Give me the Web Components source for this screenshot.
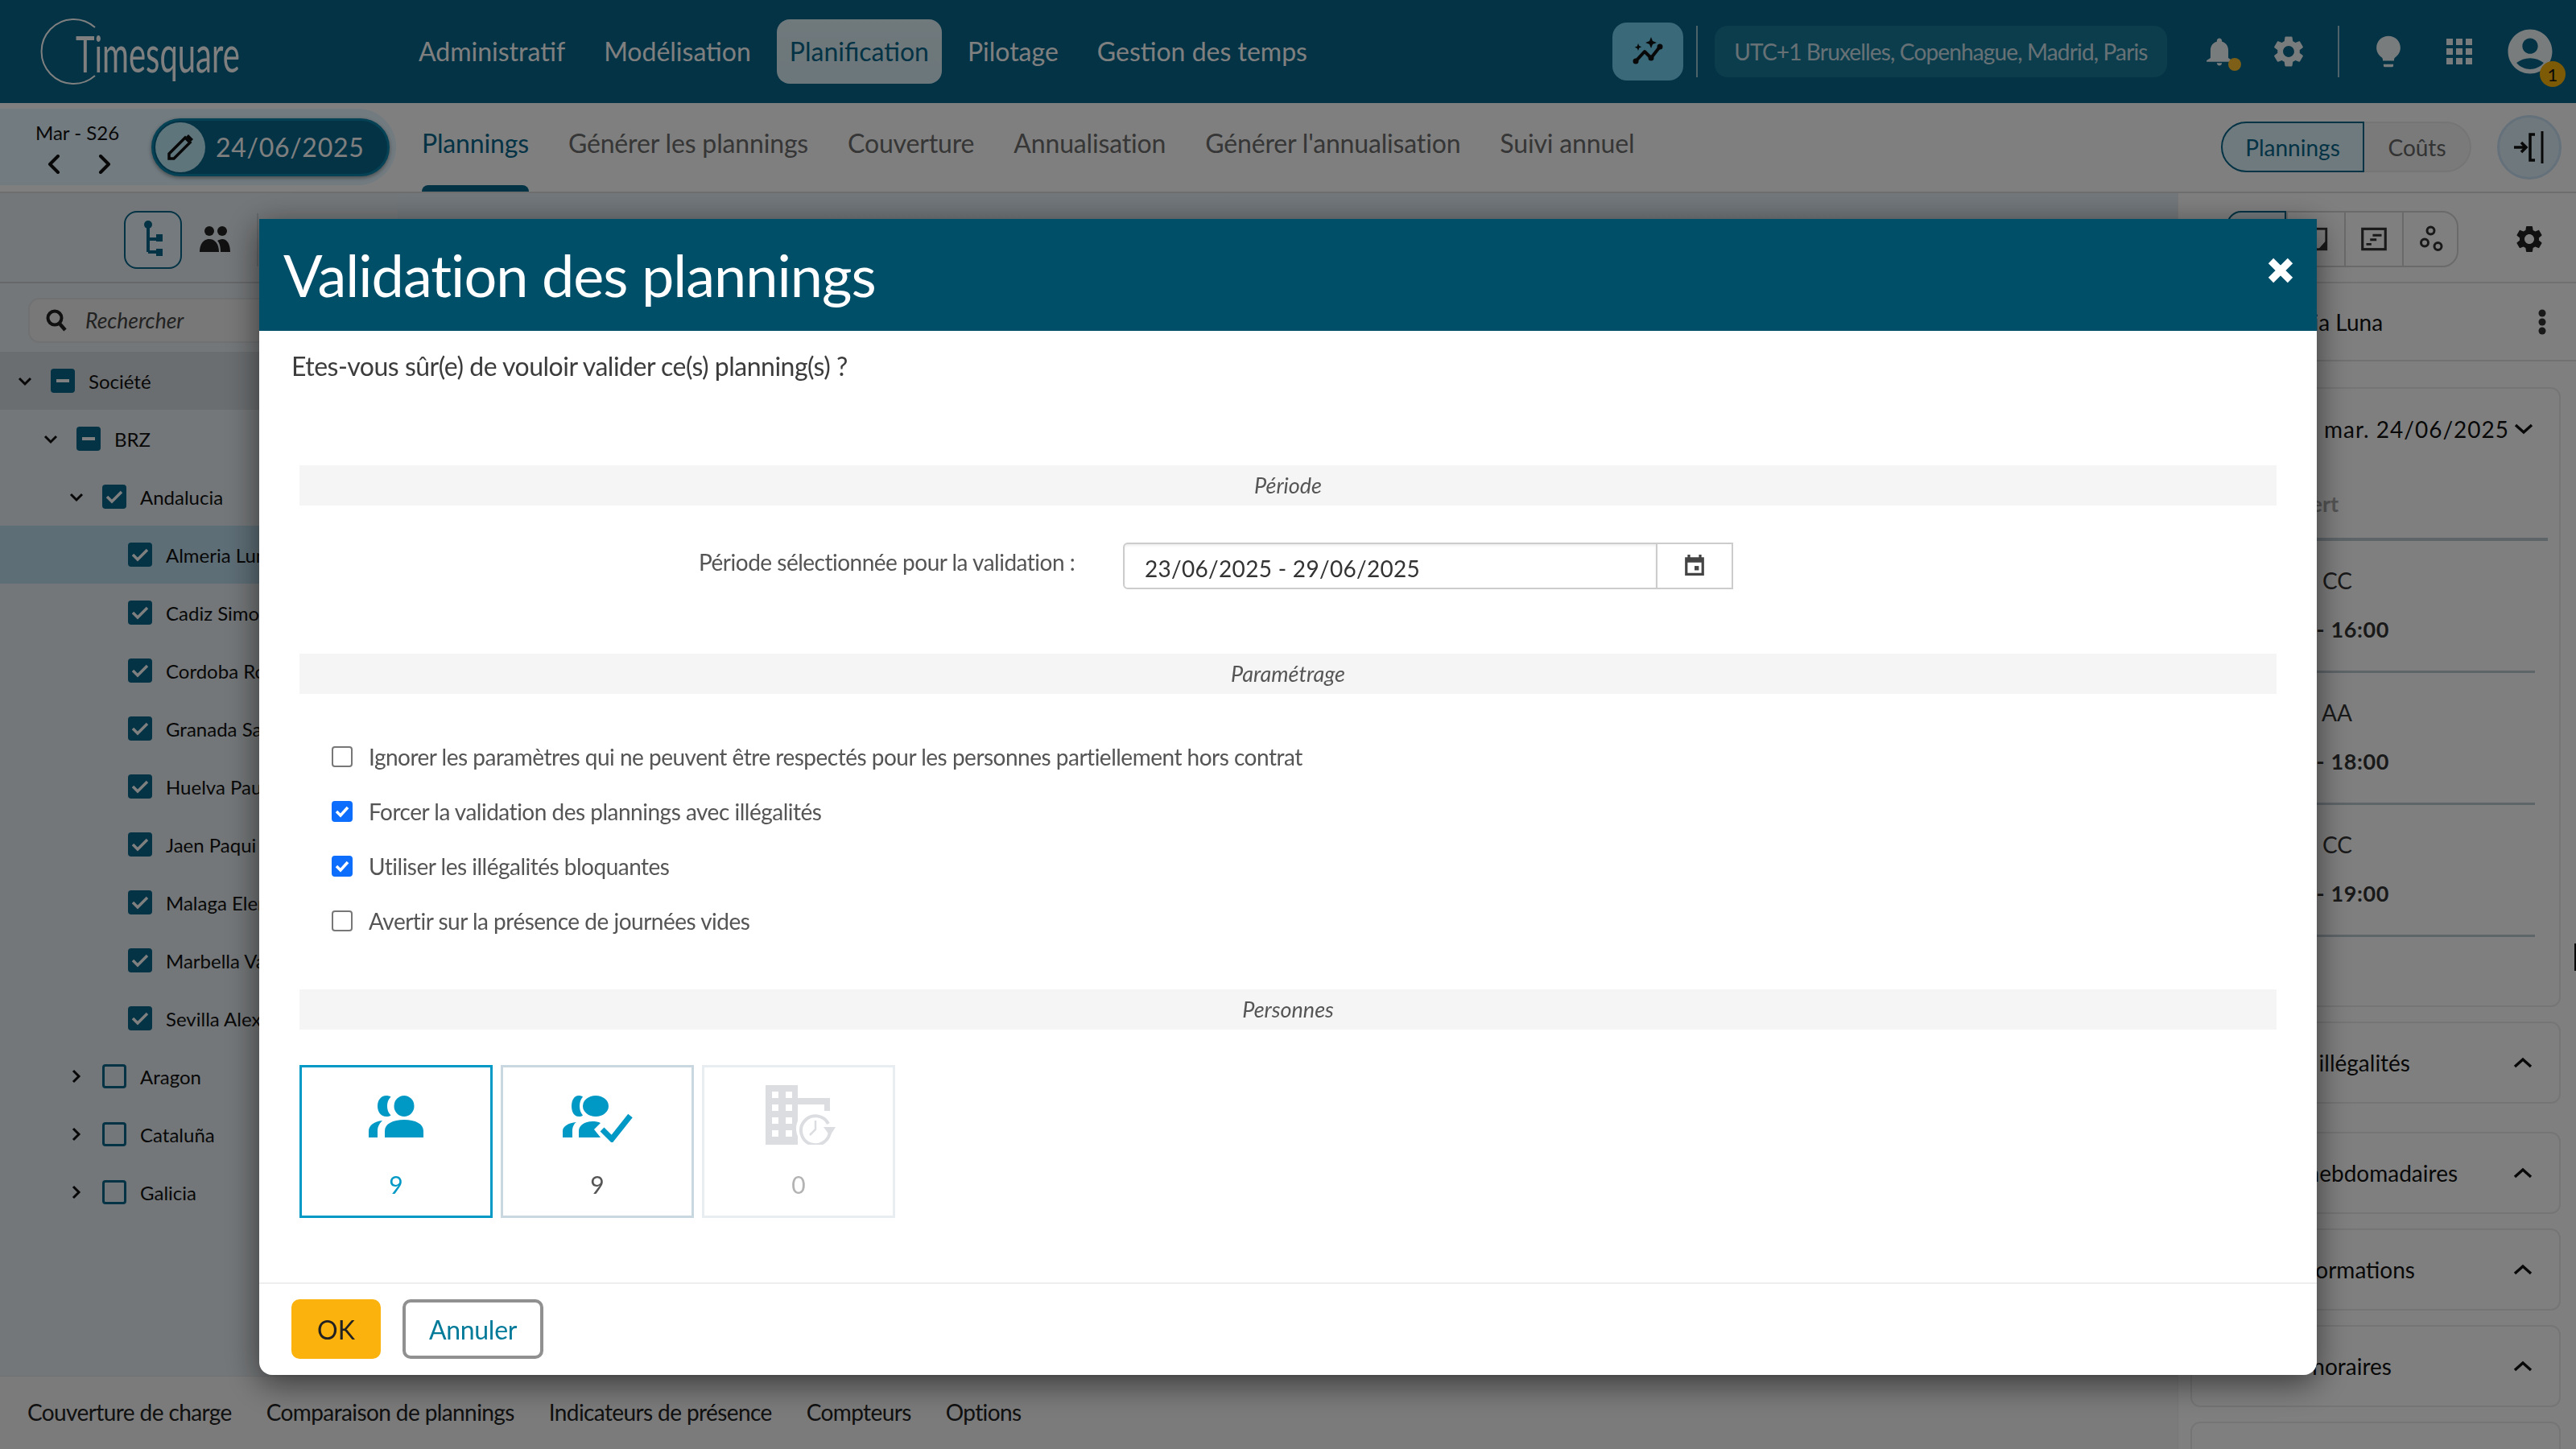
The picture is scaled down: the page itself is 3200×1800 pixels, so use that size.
<!DOCTYPE html>
<html lang="fr"><head><meta charset="utf-8"><title>Validation des plannings</title>
<style>
html,body{margin:0;padding:0;width:3200px;height:1800px;overflow:hidden;background:#fff;font-family:Lato,"Open Sans",sans-serif}
</style></head><body>
<ts-app></ts-app>
<ts-overlay>
  <ts-modal>
    <span slot="title">Validation des plannings</span>
    <ts-period></ts-period>
  </ts-modal>
</ts-overlay>
<script>
const I={
gear:'<path d="M19.14 12.94c.04-.3.06-.61.06-.94 0-.32-.02-.64-.07-.94l2.03-1.58c.18-.14.23-.41.12-.61l-1.92-3.32c-.12-.22-.37-.29-.59-.22l-2.39.96c-.5-.38-1.03-.7-1.62-.94l-.36-2.54c-.04-.24-.24-.41-.48-.41h-3.84c-.24 0-.43.17-.47.41l-.36 2.54c-.59.24-1.13.57-1.62.94l-2.39-.96c-.22-.08-.47 0-.59.22L2.74 8.87c-.12.21-.08.47.12.61l2.03 1.58c-.05.3-.09.63-.09.94s.02.64.07.94l-2.03 1.58c-.18.14-.23.41-.12.61l1.92 3.32c.12.22.37.29.59.22l2.39-.96c.5.38 1.03.7 1.62.94l.36 2.54c.05.24.24.41.48.41h3.84c.24 0 .44-.17.47-.41l.36-2.54c.59-.24 1.13-.56 1.62-.94l2.39.96c.22.08.47 0 .59-.22l1.92-3.32c.12-.22.07-.47-.12-.61l-2.01-1.58zM12 15.6c-1.98 0-3.6-1.62-3.6-3.6s1.62-3.6 3.6-3.6 3.6 1.62 3.6 3.6-1.62 3.6-3.6 3.6z"/>',
bell:'<path d="M12 23c1.1 0 2-.9 2-2h-4c0 1.1.9 2 2 2zm7-6v-6c0-3.4-1.9-6.1-5-6.8V3.500c0-1.100-.9-2-2-2s-2 .9-2 2v.7C6.900 4.900 5 7.600 5 11v6l-3 2v1h20v-1l-3-2z"/>',
bulb:'<path d="M8.500 21h7v1.200c0 .5-.4.8-.8.8H9.300c-.4 0-.8-.3-.8-.8V21zM12 1C7 1 3.500 4.800 3.500 9.300c0 3 1.600 5.300 3.700 6.900.6.500.8 1.100.8 1.800v.5h8V18c0-.7.2-1.300.8-1.800 2.100-1.600 3.700-3.900 3.700-6.900C20.500 4.800 17 1 12 1z"/>',
user:'<path d="M12 2C6.480 2 2 6.480 2 12s4.480 10 10 10 10-4.480 10-10S17.520 2 12 2zm0 4c1.930 0 3.500 1.570 3.500 3.500S13.930 13 12 13s-3.500-1.570-3.500-3.500S10.070 6 12 6zm0 14c-2.030 0-4.430-.82-6.140-2.880C7.550 15.800 9.680 15 12 15s4.450.8 6.140 2.120C16.430 19.180 14.030 20 12 20z"/>',
};
function svg(p,s,c,vb='0 0 24 24',extra=''){return `<svg width="${s}" height="${s}" viewBox="${vb}" fill="${c}" style="display:block;flex:none;${extra}">${p}</svg>`}
const def=(n,css,html,init)=>customElements.define(n,class extends HTMLElement{
  connectedCallback(){ if(this.shadowRoot)return; const r=this.attachShadow({mode:'open'});
    const h=typeof html==='function'?html(this):html; r.innerHTML=`<style>${css}</style>${h}`; if(init)init(this,r);}
});

def('ts-app',`:host{display:grid;grid-template-rows:128px 112px 1fr;width:3200px;height:1800px;font-family:Lato,sans-serif}
.body{display:grid;grid-template-columns:2705px 495px;min-height:0}
.main{display:grid;grid-template-rows:1fr 91px;min-height:0}
.up{display:grid;grid-template-columns:494px 1fr;min-height:0}
.mid{background:linear-gradient(#e4f0f8,#dde6ec 60px,#e8eef2)}`,
`<ts-topbar></ts-topbar><ts-subbar></ts-subbar>
<div class="body"><div class="main"><div class="up"><ts-tree></ts-tree><div class="mid"></div></div><ts-bottom></ts-bottom></div><ts-right></ts-right></div>`);

def('ts-topbar',`:host{display:flex;align-items:center;background:#06668a;color:#fff;height:128px;box-sizing:border-box}
.logo{width:504px;height:128px;flex:none;display:flex;align-items:center;box-sizing:border-box;padding-left:48px}
.logo svg{flex:none}
.logo span{display:block;font:400 62px/1 Lato,sans-serif;margin-left:-28px;margin-top:4px;transform:scaleX(.645);transform-origin:0 50%;white-space:nowrap}
nav{display:flex;gap:16px;width:1499px;flex:none;font-size:32px}
nav a{height:80px;display:flex;align-items:center;padding:0 16px;border-radius:16px;white-space:nowrap;padding-bottom:1px;box-sizing:border-box}
nav a.on{background:linear-gradient(#e0f2f8,#d7eef6);color:#06668a}
.spark{width:88px;height:72px;border-radius:18px;background:#74d4f5;display:flex;align-items:center;justify-content:center;flex:none}
.div{width:2px;height:64px;background:#9dc4d2;flex:none}
.tz{margin-left:21px;height:64px;width:562px;border-radius:16px;background:#187a9a;color:#cfe3ea;display:flex;align-items:center;justify-content:center;font-size:28px;flex:none;letter-spacing:-.85px;white-space:nowrap}
.ic{flex:none;position:relative;display:flex;align-items:center;justify-content:center}
.dot{position:absolute;right:-8px;bottom:-4px;width:16px;height:16px;border-radius:50%;background:#fcbf2f}
.badge{position:absolute;right:-11px;bottom:-11px;width:32px;height:32px;border-radius:50%;background:#fbb40a;color:#111;font-size:22px;display:flex;align-items:center;justify-content:center}`,
`<div class="logo"><svg width="74" height="84" viewBox="0 0 74 84"><path d="M70 12 A40 40 0 1 0 70 72" fill="none" stroke="#fff" stroke-width="2"/></svg><span>Timesquare</span></div>
<nav><a>Administratif</a><a>Modélisation</a><a class="on">Planification</a><a>Pilotage</a><a>Gestion des temps</a></nav>
<div class="spark"><svg width="40" height="36" viewBox="0 0 40 36"><path d="M5 30 L16 18 L24 26 L35 12" fill="none" stroke="#111" stroke-width="4" stroke-linecap="round" stroke-linejoin="round"/><circle cx="5" cy="30" r="3.500" fill="#111"/><circle cx="24" cy="26" r="3.500" fill="#111"/><circle cx="35" cy="12" r="3.500" fill="#111"/><path d="M24 0l2 5 5 2-5 2-2 5-2-5-5-2 5-2zM8 8l1.300 3 3 1.300-3 1.300L8 17l-1.300-3-3-1.300 3-1.300z" fill="#111"/></svg></div>
<div class="div" style="margin-left:16px"></div>
<div class="tz">UTC+1 Bruxelles, Copenhague, Madrid, Paris</div>
<div class="ic" style="margin-left:46px;width:38px;height:40px">${svg(I.bell,38,'#f0f8fb')}<i class="dot"></i></div>
<div class="ic" style="margin-left:44px">${svg(I.gear,46,'#f0f8fb')}</div>
<div class="div" style="margin-left:38px"></div>
<div class="ic" style="margin-left:40px">${svg(I.bulb,42,'#f0f8fb')}</div>
<div class="ic" style="margin-left:51px;width:32px;height:32px;display:grid;grid-template-columns:repeat(3,8px);gap:4px">${'<i style="background:#f0f8fb;width:8px;height:8px;display:block"></i>'.repeat(9)}</div>
<div class="ic" style="margin-left:39px;width:66px;height:66px">${svg(I.user,66,'#f0f8fb')}<span class="badge">1</span></div>`);

def('ts-subbar',`:host{display:flex;align-items:stretch;background:#fff;height:112px;box-sizing:border-box;border-bottom:2px solid #dcdcdc}
.w{width:492px;height:95px;margin-top:7px;background:#e4f6ff;border-radius:0 48px 48px 0;display:flex;align-items:center;flex:none;box-sizing:border-box;padding-left:44px}
.wk{width:102px;text-align:center;font-size:24px;color:#111;white-space:nowrap}
.ar{display:flex;justify-content:space-between;padding:13px 8px 0 15px}
.pill{margin-left:42px;width:296px;height:72px;box-sizing:border-box;border-radius:36px;background:#06668a;border:3px solid #0b84ab;display:flex;align-items:center;color:#fff;box-shadow:0 2px 5px #0006;font-size:32px;letter-spacing:.7px}
.c{width:62px;height:62px;border-radius:50%;background:#bdeaf8;margin:0 13px 0 2px;display:flex;align-items:center;justify-content:center;flex:none}
.tabs{display:flex;gap:49px;margin-left:32px;font-size:32px;color:#6c6c6c;width:2235px;flex:none;align-self:stretch}
.tabs a{height:110px;display:flex;align-items:center;box-sizing:border-box;padding-bottom:12px;white-space:nowrap;letter-spacing:-.16px;position:relative}
.tabs a.on{color:#06668a}
.tabs a.on::after{content:"";position:absolute;left:0;right:0;bottom:0;height:8px;background:#06668a;border-radius:8px 8px 0 0}
.seg{display:flex;height:63px;margin-top:23px;font-size:28px}
.seg a{display:flex;align-items:center;justify-content:center;box-sizing:border-box;white-space:nowrap}
.seg .a{width:178px;background:#dff4fd;border:2px solid #06668a;border-radius:32px 0 0 32px;color:#06668a}
.seg .b{width:133px;background:#f4f4f4;border:2px solid #eaeaea;border-left:0;border-radius:0 32px 32px 0;color:#666}
.rb{margin-left:32px;margin-top:15px;width:80px;height:80px;border-radius:50%;box-sizing:border-box;background:#dff0fb;border:3px solid #c9e0f5;display:flex;align-items:center;justify-content:center}`,
`<div class="w"><div><div class="wk">Mar - S26</div><div class="ar"><svg width="16" height="24" viewBox="0 0 16 24"><path d="M13 2 3 12l10 10" fill="none" stroke="#111" stroke-width="4" stroke-linecap="round" stroke-linejoin="round"/></svg><svg width="16" height="24" viewBox="0 0 16 24"><path d="M3 2l10 10L3 22" fill="none" stroke="#111" stroke-width="4" stroke-linecap="round" stroke-linejoin="round"/></svg></div></div>
<div class="pill"><div class="c"><svg width="34" height="34" viewBox="0 0 34 34"><path d="M3 31v-6L23 5l6 6L9 31z" fill="none" stroke="#111" stroke-width="3.500"/><path d="M24 4l3-3 6 6-3 3z" fill="#111"/></svg></div>24/06/2025</div></div>
<div class="tabs"><a class="on">Plannings</a><a>Générer les plannings</a><a>Couverture</a><a>Annualisation</a><a>Générer l'annualisation</a><a>Suivi annuel</a></div>
<div class="seg"><a class="a">Plannings</a><a class="b">Coûts</a></div>
<div class="rb"><svg width="40" height="40" viewBox="0 0 40 40"><path d="M1 20h14M10 14l6 6-6 6" fill="none" stroke="#111" stroke-width="3.500"/><path d="M27 4h-6v32h6" fill="none" stroke="#111" stroke-width="3.500"/><path d="M36 0v40" stroke="#111" stroke-width="3"/></svg></div>`);

def('ts-tree-row',`:host{display:flex;align-items:center;height:72px;box-sizing:border-box;font-size:24px;color:#111;white-space:nowrap;padding-left:calc(var(--l,0)*32px + 22px)}
:host([sel]){background:#bcdcec}
:host([head]){background:#d6dce0}
.ch{width:18px;height:18px;flex:none;margin-right:23px}
.b{width:30px;height:30px;box-sizing:border-box;border-radius:4px;flex:none;margin-right:17px;display:flex;align-items:center;justify-content:center;background:#06668a}
.b.e{background:transparent;border:3px solid #06668a}`,
(h)=>{const st=h.getAttribute('st'),ch=h.getAttribute('ch');
 const chev=ch==='d'?'<path d="M2 6l7 7 7-7" fill="none" stroke="#111" stroke-width="3"/>':ch==='r'?'<path d="M5 2l7 7-7 7" fill="none" stroke="#111" stroke-width="3"/>':'';
 const m=st==='m'?'<i style="display:block;width:16px;height:4px;background:#fff"></i>':st==='c'?'<svg width="22" height="18" viewBox="0 0 22 18"><path d="M2 9l6 6L20 3" fill="none" stroke="#fff" stroke-width="3.500"/></svg>':'';
 return `<svg class="ch" viewBox="0 0 18 18">${chev}</svg><span class="b ${st==='e'?'e':''}">${m}</span><slot></slot>`});

def('ts-tree',`:host{display:block;background:#e8eef2;min-height:0;overflow:hidden}
.t{height:112px;box-sizing:border-box;border-bottom:2px solid #ccd0d3;display:flex;align-items:center;padding:6px 0 0 154px}
.tb{width:72px;height:72px;box-sizing:border-box;border:2px solid #06668a;border-radius:16px;display:flex;align-items:center;justify-content:center;background:#e8f4fa}
.sep{width:2px;height:66px;background:#ccd0d3;margin-left:33px}
.s{margin:18px 0 11px 35px;height:56px;box-sizing:border-box;border:2px solid #dfe2e4;border-radius:14px;background:#f1f1f1;display:flex;align-items:center;padding-left:20px;font-style:italic;font-size:26.500px;color:#444}
.s svg{margin-right:23px}`,
`<div class="t"><div class="tb"><svg width="24" height="50" viewBox="0 0 24 50"><circle cx="6" cy="6" r="5" fill="#06668a"/><path d="M6 8v32M6 24h14M6 40h14" stroke="#06668a" stroke-width="4" fill="none"/><rect x="16" y="18" width="8" height="9" fill="#06668a"/><rect x="16" y="36" width="8" height="9" fill="#06668a"/></svg></div>
<svg width="38" height="34" viewBox="0 0 38 34" style="margin-left:22px"><circle cx="12" cy="6" r="6" fill="#222"/><circle cx="28" cy="6" r="6" fill="#222"/><path d="M0 32c0-10 5-16 12-16s12 6 12 16zM26 32c0-6-1-11-4-14 2-1 4-2 6-2 6 0 10 6 10 16z" fill="#222"/></svg>
<div class="sep"></div></div>
<div class="s"><svg width="26" height="28" viewBox="0 0 26 28"><circle cx="11" cy="11" r="8.500" fill="none" stroke="#222" stroke-width="4"/><path d="M17 18l7 8" stroke="#222" stroke-width="4.500"/></svg>Rechercher</div>
<ts-tree-row l="0" ch="d" st="m" head style="--l:0">Société</ts-tree-row>
<ts-tree-row ch="d" st="m" style="--l:1">BRZ</ts-tree-row>
<ts-tree-row ch="d" st="c" style="--l:2">Andalucia</ts-tree-row>
<ts-tree-row st="c" sel style="--l:3">Almeria Luna</ts-tree-row>
<ts-tree-row st="c" style="--l:3">Cadiz Simon</ts-tree-row>
<ts-tree-row st="c" style="--l:3">Cordoba Rosa</ts-tree-row>
<ts-tree-row st="c" style="--l:3">Granada Sara</ts-tree-row>
<ts-tree-row st="c" style="--l:3">Huelva Paula</ts-tree-row>
<ts-tree-row st="c" style="--l:3">Jaen Paqui</ts-tree-row>
<ts-tree-row st="c" style="--l:3">Malaga Elena</ts-tree-row>
<ts-tree-row st="c" style="--l:3">Marbella Vale</ts-tree-row>
<ts-tree-row st="c" style="--l:3">Sevilla Alex</ts-tree-row>
<ts-tree-row ch="r" st="e" style="--l:2">Aragon</ts-tree-row>
<ts-tree-row ch="r" st="e" style="--l:2">Cataluña</ts-tree-row>
<ts-tree-row ch="r" st="e" style="--l:2">Galicia</ts-tree-row>`);

def('ts-bottom',`:host{display:flex;align-items:center;gap:43px;padding:0 0 2px 34px;box-sizing:border-box;background:#f6f6f6;border-top:1px solid #e2e2e2;font-size:28px;color:#222;white-space:nowrap;letter-spacing:-.6px}`,
`<span>Couverture de charge</span><span>Comparaison de plannings</span><span>Indicateurs de présence</span><span>Compteurs</span><span>Options</span>`);

def('ts-acc',`:host{display:flex;align-items:center;height:102px;box-sizing:border-box;border:2px solid #eaeaea;border-radius:12px;margin-bottom:18px;padding:0 33px 0 0;font-size:28px;color:#111;white-space:nowrap}
span{display:block;width:var(--w,200px);text-align:right;flex:none}
svg{margin-left:auto}`,`<span><slot></slot></span><svg width="24" height="14" viewBox="0 0 24 14"><path d="M2 12 12 3l10 9" fill="none" stroke="#111" stroke-width="3.500"/></svg>`);

def('ts-right',`:host{display:block;background:#fff;border-left:1px solid #eee;min-height:0;overflow:hidden;font-size:28px;color:#222;position:relative}
.t{height:112px;box-sizing:border-box;border-bottom:2px solid #e2e2e2;display:flex;align-items:center;padding:4px 0 0 60px}
.g{width:288px;height:70px;box-sizing:border-box;border:2px solid #d4d4d4;border-radius:20px;display:flex}
.g i{display:flex;flex:none;width:72px;align-items:center;justify-content:center;border-left:2px solid #d4d4d4;box-sizing:border-box}
.g i:first-child{border-left:0;border-radius:18px 0 0 18px;border:2px solid #06668a;margin:-2px 0 -2px -2px;width:74px;background:#e8f4fa}
.n{height:97px;box-sizing:border-box;border-bottom:2px solid #e2e2e2;display:flex;align-items:center;justify-content:space-between;padding:0 36px 0 94px;white-space:nowrap}
.n b{font-weight:400;color:#111}
.card{margin:32px 19px 18px 15px;height:770px;box-sizing:border-box;border:2px solid #eaeaea;border-radius:12px;padding-left:16px}
.d{height:99px;padding-bottom:2px;display:flex;align-items:center;justify-content:flex-end;padding-right:32px;font-size:28px;color:#111;white-space:nowrap;letter-spacing:1px;gap:6px;box-sizing:content-box}
.o{height:88px;margin-right:14px;border-bottom:4px solid #bccad2;box-sizing:border-box;color:#aaa;font-weight:700;font-size:27px;white-space:nowrap;line-height:84px}
.o span{display:block;width:166px;text-align:right}
.p{height:164px;margin-right:30px;border-bottom:3px solid #bccad2;box-sizing:border-box;padding-top:24px;white-space:nowrap}
.p .a{height:50px;line-height:50px;color:#333;width:183px;text-align:right}
.p .h{height:72px;line-height:72px;font-weight:700;color:#333;font-size:27px;letter-spacing:.6px;width:229px;text-align:right}
.ac{margin-left:15px;margin-right:19px}
.mark{position:absolute;right:0;top:932px;width:2px;height:34px;background:#111}`,
`<div class="t"><div class="g"><i></i><i>${svg('<rect x="3" y="3" width="18" height="18" fill="none" stroke="#333" stroke-width="2"/><path d="M14 21l7-8v8z" fill="#333"/>',34,'none')}</i><i>${svg('<rect x="3" y="4" width="18" height="16" fill="none" stroke="#333" stroke-width="2"/><path d="M11 9h7M9 12.500h5M6 16h4" stroke="#333" stroke-width="1.800"/>',38,'none')}</i><i>${svg('<circle cx="11" cy="5" r="3" fill="none" stroke="#333" stroke-width="2"/><circle cx="6" cy="15" r="3" fill="none" stroke="#333" stroke-width="2"/><circle cx="17" cy="18" r="3" fill="none" stroke="#333" stroke-width="2"/>',36,'none')}</i></div>
<div style="margin-left:68px">${svg(I.gear,40,'#222')}</div></div>
<div class="n"><b>Almeria Luna</b><svg width="12" height="32" viewBox="0 0 12 32"><circle cx="6" cy="5" r="4.500" fill="#333"/><circle cx="6" cy="16" r="4.500" fill="#333"/><circle cx="6" cy="27" r="4.500" fill="#333"/></svg></div>
<div class="card"><div class="d">mar. 24/06/2025 <svg width="24" height="14" viewBox="0 0 24 14"><path d="M2 2l10 9 10-9" fill="none" stroke="#111" stroke-width="3.500"/></svg></div>
<div class="o"><span>Ouvert</span></div>
<div class="p"><div class="a">Équipe CC</div><div class="h">08:00 - 16:00</div></div>
<div class="p"><div class="a">Équipe AA</div><div class="h">10:00 - 18:00</div></div>
<div class="p"><div class="a">Équipe CC</div><div class="h">11:00 - 19:00</div></div></div>
<div class="ac"><ts-acc style="--w:271px;margin-bottom:35px">Les illégalités</ts-acc><ts-acc style="--w:326px">Compteurs hebdomadaires</ts-acc><ts-acc style="--w:277px">Plus d'informations</ts-acc><ts-acc style="--w:248px">Détails des horaires</ts-acc><ts-acc></ts-acc></div>
<i class="mark"></i>`);

def('ts-overlay',`:host{position:fixed;inset:0;background:rgba(0,0,0,.5);display:block}`,`<slot></slot>`);

def('ts-modal',`:host{position:absolute;left:322px;top:272px;width:2556px;height:1436px;background:#fff;border-radius:0 0 16px 16px;box-shadow:0 10px 40px rgba(0,0,0,.55);display:flex;flex-direction:column;font-family:Lato,sans-serif}
header{height:139px;flex:none;background:#004f69;color:#fff;display:flex;align-items:center;justify-content:space-between;box-sizing:border-box;padding:0 27px 2px 30px;font-size:72px;letter-spacing:-.98px;white-space:nowrap}
header svg{margin-top:-10px}
.q{margin:24px 0 0 40px;font-size:32px;color:#3c3c3c;height:40px;line-height:40px;white-space:nowrap;letter-spacing:-.5px}
.bd{flex:1}
footer{height:115px;border-top:2px solid #eee;box-sizing:border-box;padding:19px 0 0 40px;display:flex;gap:27px;font-size:32px}
button{font:inherit;height:74px;border-radius:10px;cursor:pointer}
.ok{width:111px;background:#fbb20c;border:0;color:#222}
.no{width:175px;background:#fff;border:4px solid #909090;color:#007a99;letter-spacing:-.3px}`,
`<header><slot name="title"></slot><svg width="36" height="36" viewBox="0 0 36 36"><path d="M6 6l24 24M30 6 6 30" stroke="#fff" stroke-width="9"/></svg></header>
<div class="q">Etes-vous sûr(e) de vouloir valider ce(s) planning(s) ?</div>
<div class="bd"><slot></slot></div>
<footer><button class="ok">OK</button><button class="no">Annuler</button></footer>`);

def('ts-section',`:host{display:block;margin:0 50px;height:50px;line-height:50px;background:#f5f5f5;text-align:center;font-style:italic;font-size:27px;color:#555}`,`<slot></slot>`);

def('ts-check',`:host{display:flex;align-items:center;height:68px;margin-left:90px;font-size:28px;color:#555;white-space:nowrap;letter-spacing:-.5px}
.b{width:26px;height:26px;box-sizing:border-box;border:2px solid #777;border-radius:4px;margin-right:20px;flex:none;display:flex;align-items:center;justify-content:center}
:host([on]) .b{background:#0d6efd;border-color:#0d6efd}`,
(h)=>`<span class="b">${h.hasAttribute('on')?'<svg width="18" height="16" viewBox="0 0 18 16"><path d="M2 8l5 5 9-10" fill="none" stroke="#fff" stroke-width="3.500"/></svg>':''}</span><slot></slot>`);

const P='<path d="M44 0a12.500 13 0 1 1 0 26a12.500 13 0 1 1 0-26zM22 0c2 0 4 .5 5.500 1.500C24 5 23 9 23 13s1 8 4.500 11.500C26 25.500 24 26 22 26 15 26 11 20 11 13S15 0 22 0zM44 30c14 0 24 5 24 14v8H20v-8c0-9 10-14 24-14zM17 31c-3 3-6 7-6 13v8H0v-8c0-7 7-12 17-13z"/>';
const PC='<path d="M41 0a16 13 0 1 1 0 26a16 13 0 1 1 0-26zM20 0c2 0 4 .5 5 1.500C22 5 21 9 21 13s1 8 4 11.500C24 25.500 22 26 20 26 14 26 11 20 11 13S14 0 20 0zM17 33c-3 2-5 6-5 11v8H0v-8c0-6 7-10 17-11zM37 32c4 0 7 .5 10 2l-8 8 8 10H20v-8c0-7 7-12 17-12z"/><path d="M49 42 61 54 84 25" fill="none" stroke="currentColor" stroke-width="7"/>';
const B='<defs><clipPath id="cb"><path d="M0 0H88V74H0ZM62 30a24 24 0 1 0 .01 0Z" clip-rule="evenodd"/></clipPath></defs><g clip-path="url(#cb)"><rect width="40" height="74"/><path d="M40 16H80V32H73V24H40Z"/></g><g fill="#fff"><rect x="8" y="8" width="8" height="8"/><rect x="25" y="8" width="8" height="8"/><rect x="8" y="24" width="8" height="8"/><rect x="25" y="24" width="8" height="8"/><rect x="8" y="40" width="8" height="8"/><rect x="25" y="40" width="8" height="8"/><rect x="8" y="56" width="8" height="8"/><rect x="25" y="56" width="8" height="8"/></g><path d="M78 48A18 18 0 1 0 80 56" fill="none" stroke="currentColor" stroke-width="4"/><path d="M62 44v11l-7 7" fill="none" stroke="currentColor" stroke-width="2.500"/><path d="M72 52h15l-7 11z"/>';
def('ts-person',`:host{display:flex;flex-direction:column;align-items:center;width:240px;height:190px;box-sizing:border-box;border:3px solid var(--b,#0099c6);color:var(--c,#0099c6);font-size:30px;flex:none}
.i{height:129px;display:flex;align-items:center;justify-content:center;box-sizing:border-box;padding-bottom:8px}
.n{color:var(--n,inherit);line-height:34px;margin-top:-1px}`,
(h)=>{const k=h.getAttribute('k');
 const g=k==='a'?`<svg width="68" height="52" viewBox="0 0 68 52" fill="currentColor">${P}</svg>`:k==='b'?`<svg width="87" height="58" viewBox="0 0 87 58" fill="currentColor" style="margin-top:6px">${PC}</svg>`:`<svg width="88" height="74" viewBox="0 0 88 74" fill="currentColor" style="margin-left:6px;margin-top:-4px">${B}</svg>`;
 return `<div class="i">${g}</div><div class="n"><slot></slot></div>`});

def('ts-period',`:host{display:block}
.sp{height:24px}
.r{display:flex;align-items:center;height:58px;margin:46px 0 80px 546px}
.l{width:527px;font-size:28px;color:#555;white-space:nowrap;margin-top:-11px;letter-spacing:-.5px}
.in{width:664px;height:58px;box-sizing:border-box;border:2px solid #ccc;border-radius:6px 0 0 6px;box-shadow:inset 0 2px 3px #0001;padding:6px 0 0 25px;display:flex;align-items:center;font-size:28px;color:#333;letter-spacing:.3px}
.cal{width:94px;height:58px;box-sizing:border-box;border:2px solid #ccc;border-left:0;display:flex;align-items:center;justify-content:center}
.chk{margin:44px 0 51px}
.cards{display:flex;gap:10px;margin:44px 0 0 50px}`,
`<div class="sp" style="height:172px;margin-top:-69px;visibility:hidden"></div>
<ts-section>Période</ts-section>
<div class="r"><div class="l">Période sélectionnée pour la validation :</div><div class="in">23/06/2025 - 29/06/2025</div><div class="cal"><svg width="28" height="28" viewBox="0 0 26 26" style="margin-top:-2px"><path d="M5 1h3v3h10V1h3v3h3v21H2V4h3zM5 10v12h16V10z" fill="#444"/><rect x="13" y="14" width="5" height="5" fill="#444"/></svg></div></div>
<ts-section>Paramétrage</ts-section>
<div class="chk"><ts-check>Ignorer les paramètres qui ne peuvent être respectés pour les personnes partiellement hors contrat</ts-check>
<ts-check on>Forcer la validation des plannings avec illégalités</ts-check>
<ts-check on>Utiliser les illégalités bloquantes</ts-check>
<ts-check>Avertir sur la présence de journées vides</ts-check></div>
<ts-section>Personnes</ts-section>
<div class="cards"><ts-person k="a">9</ts-person>
<ts-person k="b" style="--b:#c9d7e0;--n:#555">9</ts-person>
<ts-person k="c" style="--b:#e7edf1;--c:#dcdde0;--n:#b3b3b3">0</ts-person></div>`);
</script>
</body></html>
